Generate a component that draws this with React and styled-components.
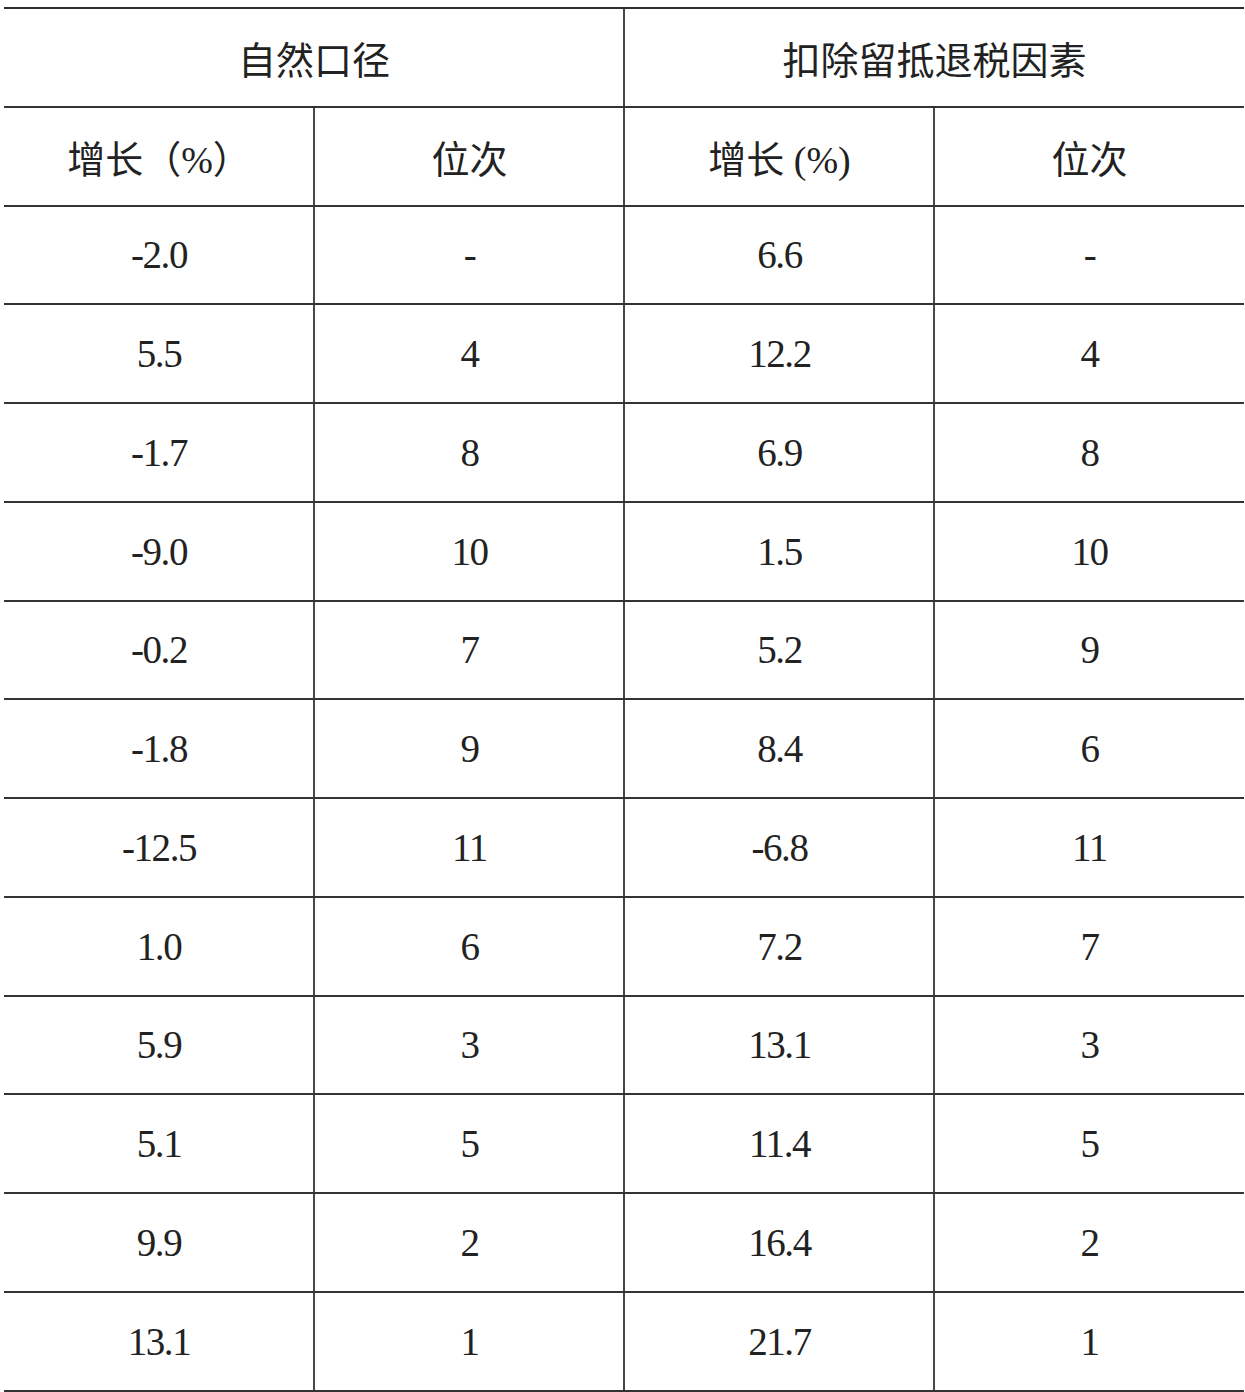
import React from 'react';
import styled, { createGlobalStyle } from 'styled-components';

const GlobalStyle = createGlobalStyle`
  html, body {
    margin: 0;
    padding: 0;
    background: #ffffff;
  }
  body {
    font-family: "Liberation Serif", "Noto Sans CJK SC", serif;
    color: #222222;
  }
`

const rows = [
  ['-2.0', '-', '6.6', '-'],
  ['5.5', '4', '12.2', '4'],
  ['-1.7', '8', '6.9', '8'],
  ['-9.0', '10', '1.5', '10'],
  ['-0.2', '7', '5.2', '9'],
  ['-1.8', '9', '8.4', '6'],
  ['-12.5', '11', '-6.8', '11'],
  ['1.0', '6', '7.2', '7'],
  ['5.9', '3', '13.1', '3'],
  ['5.1', '5', '11.4', '5'],
  ['9.9', '2', '16.4', '2'],
  ['13.1', '1', '21.7', '1'],
]

export default function App() {
  return (
    <Page>
      <GlobalStyle />
      <Table>
        <Row>
          <Cell $span={2} $head>自然口径</Cell>
          <Cell $span={2} $head $divider>扣除留抵退税因素</Cell>
        </Row>
        <Row>
          <Cell $head>增长（%）</Cell>
          <Cell $head $divider>位次</Cell>
          <Cell $head $divider>增长 (%)</Cell>
          <Cell $head $divider>位次</Cell>
        </Row>
        {rows.map((row, i) => (
          <Row key={i}>
            {row.map((value, j) => (
              <Cell key={j} $divider={j > 0}>{value}</Cell>
            ))}
          </Row>
        ))}
      </Table>
    </Page>
  )
}

let Page = styled.div`
  padding: 7px 0 0 4px;
`

let Table = styled.div`
  width: 1240px;
  border-top: 2px solid #2e2e2e;
`

let Row = styled.div`
  display: grid;
  grid-template-columns: repeat(4, 310px);
  height: 98.75px;
  box-sizing: border-box;
  border-bottom: 2px solid #333333;
`

let Cell = styled.div`
  grid-column: span ${props => props.$span || 1};
  display: flex;
  justify-content: center;
  align-items: center;
  box-sizing: border-box;
  margin-left: ${props => props.$divider ? '-1px' : '0'};
  border-left: ${props => props.$divider ? '2px solid #474747' : 'none'};
  font-size: ${props => props.$head ? '38px' : '39px'};
  letter-spacing: ${props => props.$head ? '0' : '-1.4px'};
  white-space: nowrap;
`
